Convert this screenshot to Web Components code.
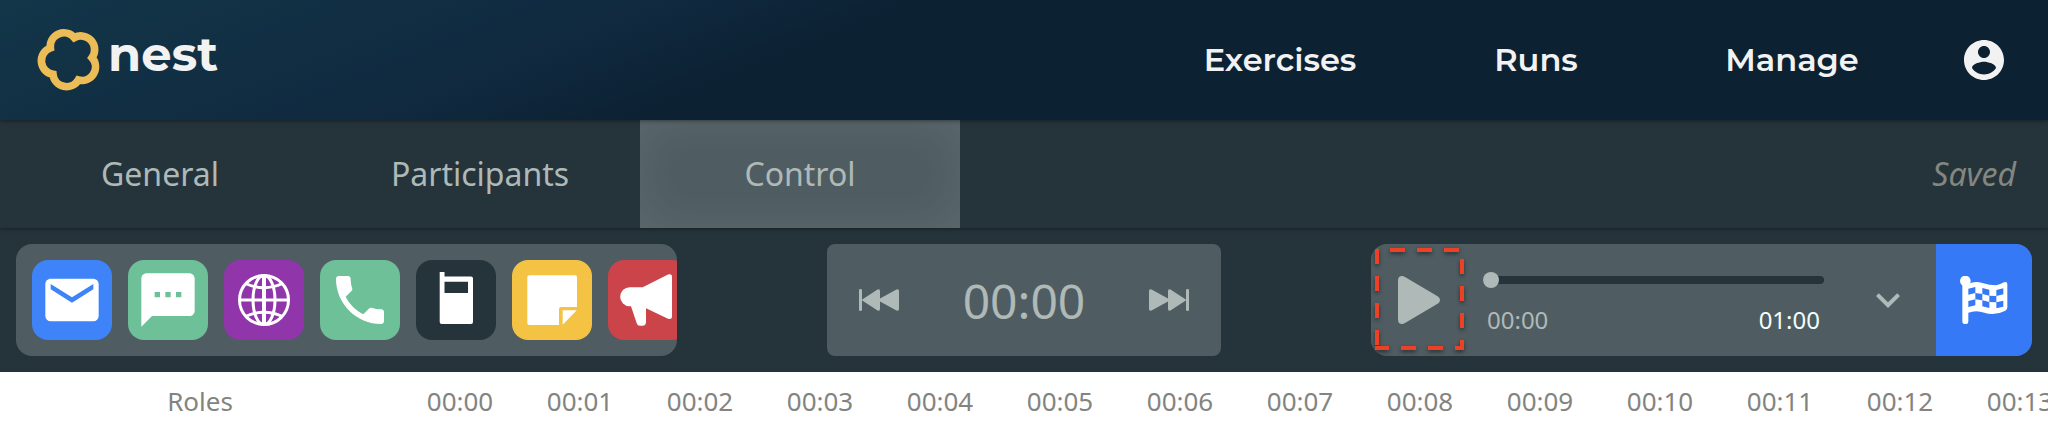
<!DOCTYPE html>
<html lang="en">
<head>
<meta charset="utf-8">
<meta name="viewport" content="width=device-width, initial-scale=1">
<title>Nest - Control</title>
<style>
    body {
        margin: 0;
        background: #fff;
        font-family: "Noto Sans", "Open Sans", sans-serif;
        overflow: hidden;
    }
</style>
</head>
<body>
<nest-app></nest-app>

<script>
// icon bodies, keyed by name: [viewBox, markup]
const ICONS = {
    logo: ['110 84 189 192', '<path fill="none" stroke="currentColor" stroke-width="23" d="M150 144A41 41 0 0 1 222 113A41 41 0 0 1 275 173A41 41 0 0 1 234 240A41 41 0 0 1 158 223A41 41 0 0 1 150 144Z"/>'],
    account: ['2 2 20 20', '<path d="M12 2C6.48 2 2 6.48 2 12s4.48 10 10 10 10-4.48 10-10S17.52 2 12 2zm0 3c1.66 0 3 1.34 3 3s-1.34 3-3 3-3-1.34-3-3 1.34-3 3-3zm0 14.2c-2.5 0-4.71-1.28-6-3.22.03-1.99 4-3.08 6-3.08 1.99 0 5.97 1.09 6 3.08-1.29 1.94-3.5 3.22-6 3.22z"/>'],
    mail: ['-3 -3 30 30', '<path d="M20 8l-8 5-8-5V6l8 5 8-5m0-2H4c-1.11 0-2 .89-2 2v12a2 2 0 0 0 2 2h16a2 2 0 0 0 2-2V6a2 2 0 0 0-2-2z"/>'],
    sms: ['-3 -3 30 30', '<path d="M20 2H4c-1.1 0-2 .9-2 2v18l4-4h14c1.1 0 2-.9 2-2V4c0-1.1-.9-2-2-2zM9 11H7V9h2v2zm4 0h-2V9h2v2zm4 0h-2V9h2v2z"/>'],
    globe: ['0 0 80 80', '<g fill="none" stroke="currentColor" stroke-width="3"><circle cx="40" cy="40" r="24.5"/><ellipse cx="40" cy="40" rx="11" ry="24.5"/><path stroke-width="4" d="M40 15v50"/><path d="M15 40h50M21.5 23.5Q40 32 58.5 23.5M21.5 56.5Q40 48 58.5 56.5"/></g>'],
    phone: ['-3 -3 30 30', '<path d="M6.62 10.79c1.44 2.83 3.76 5.14 6.59 6.59l2.2-2.2c.27-.27.67-.36 1.02-.24 1.12.37 2.33.57 3.57.57.55 0 1 .45 1 1V20c0 .55-.45 1-1 1-9.39 0-17-7.61-17-17 0-.55.45-1 1-1h3.5c.55 0 1 .45 1 1 0 1.25.2 2.45.57 3.57.11.35.03.74-.25 1.02l-2.2 2.2z"/>'],
    radio: ['0 0 80 80', '<path fill-rule="evenodd" d="M23.7 12h4.8v4.5H55a2 2 0 0 1 2 2V62a2 2 0 0 1-2 2H25.7a2 2 0 0 1-2-2zM28.5 21.7V33H52V21.7z"/>'],
    note: ['0 0 80 80', '<path d="M17.3 15.3H63a2 2 0 0 1 2 2V47H49a2 2 0 0 0-2 2v16H17.3a2 2 0 0 1-2-2V17.3a2 2 0 0 1 2-2zM50.7 50.3h14L50.7 64.7z"/>'],
    megaphone: ['0 0 80 80', '<path d="M21.7 27.2H34.7L60 14.6Q64 13.5 64 17V56.5Q64 60 60 58.7L38 48.3V62Q38 65.7 34.5 65.7H32Q29.5 65.7 28.8 63.5L23 46.3H21.7a9.55 9.55 0 0 1 0-19.1z"/>'],
    back: ['0 0 40 24', '<rect y="1" width="3" height="22" rx="1.3"/><path d="M2.5 12L18.5 1.5Q21 .5 21 3V10.500L37.5 1.5Q40 .5 40 3V21Q40 23.5 37.5 22.5L21 13.5V21Q21 23.5 18.5 22.5z"/>'],
    play: ['0 0 42 48', '<path d="M0 4.5Q0 0 4 0Q5.5 0 7 .9L40 20.5Q42 22 42 24T40 27.5L7 47.1Q5.5 48 4 48Q0 48 0 43.5z"/>'],
    chevron: ['0 0 24 24', '<path d="M7.41 8.59L12 13.17l4.59-4.58L18 10l-6 6-6-6z"/>'],
    flag: ['812 153 144 144', '<circle cx="828" cy="168" r="16"/><path fill-rule="evenodd" d="M819 168h18v8Q858 167 879 174T921 181Q933 178 944 172Q954 168 954 178V247Q954 254 948 257Q915 274 885 263Q860 254 837 263V290Q837 297 830 297H826Q819 297 819 290zM837 191V209L858 204V186zM879 189V207L900 212V194zM921 195V213L942 208V190zM858 204V223L879 226V207zM900 212V231L921 232V213zM837 228V246L858 241V223zM879 226V244L900 249V231zM921 232V250L942 245V227z"/>'],
};

class NestIcon extends HTMLElement {
    connectedCallback() {
        const [box, body] = ICONS[this.getAttribute('name')];
        this.attachShadow({ mode: 'open' });
        this.shadowRoot.innerHTML = `
            <style>
                :host { display: block; flex: none; }
                svg { display: block; width: 100%; height: 100%; fill: currentColor; }
            </style>
            <svg viewBox="${box}" aria-hidden="true">${body}</svg>
        `;
    }
}
customElements.define('nest-icon', NestIcon);

class NestHeader extends HTMLElement {
    connectedCallback() {
        this.attachShadow({ mode: 'open' });
        this.shadowRoot.innerHTML = `
            <style>
                :host {
                    display: block;
                    position: relative;
                    z-index: 2;
                    color: #f2f2f2;
                    background: linear-gradient(158deg, #133649 0%, #10293f 29%, #0c2132 40%);
                    box-shadow: 0 1px 4px rgba(0, 0, 0, .4);
                    font-family: Montserrat, Inter, sans-serif;
                    font-weight: 700;
                }
                header { display: flex; justify-content: space-between; height: 120px; }
                a { color: inherit; text-decoration: none; }
                .brand { display: flex; align-items: center; gap: 8px; padding-left: 37px; font-size: 48px; line-height: 64px; }
                .brand nest-icon { width: 63px; height: 64px; color: #ecbd56; }
                .brand span { padding-bottom: 12px; }
                nav { display: flex; font-size: 32px; font-weight: 600; }
                nav a {
                    display: flex;
                    align-items: center;
                    justify-content: center;
                    box-sizing: border-box;
                    width: 256px;
                    padding-bottom: 2px;
                }
                nav button { width: 128px; padding: 0; border: 0; background: none; color: inherit; }
                nav nest-icon { width: 40px; height: 40px; margin: 0 auto; }
            </style>
            <header>
                <a class="brand" href="#"><nest-icon name="logo"></nest-icon><span>nest</span></a>
                <nav>
                    <a href="#exercises">Exercises</a>
                    <a href="#runs">Runs</a>
                    <a href="#manage">Manage</a>
                    <button aria-label="Account"><nest-icon name="account"></nest-icon></button>
                </nav>
            </header>
        `;
    }
}
customElements.define('nest-header', NestHeader);

class NestTabs extends HTMLElement {
    connectedCallback() {
        this.attachShadow({ mode: 'open' });
        this.shadowRoot.innerHTML = `
            <style>
                :host {
                    display: block;
                    position: relative;
                    z-index: 1;
                    background: #25343b;
                    color: #afb9b8;
                    font-size: 32px;
                    box-shadow: 0 1px 4px rgba(0, 0, 0, .4);
                }
                nav { display: flex; height: 108px; }
                a {
                    display: flex;
                    align-items: center;
                    justify-content: center;
                    box-sizing: border-box;
                    width: 320px;
                    padding-bottom: 2px;
                    color: inherit;
                    text-decoration: none;
                }
                a[aria-current] { background: #4f5d62; box-shadow: inset 0 0 48px rgba(255, 255, 255, .08); }
                em { margin: auto 32px auto auto; padding-bottom: 2px; color: #848680; }
            </style>
            <nav>
                <a href="#general">General</a>
                <a href="#participants">Participants</a>
                <a href="#control" aria-current="page">Control</a>
                <em>Saved</em>
            </nav>
        `;
    }
}
customElements.define('nest-tabs', NestTabs);

class ToolPalette extends HTMLElement {
    connectedCallback() {
        this.attachShadow({ mode: 'open' });
        this.shadowRoot.innerHTML = `
            <style>
                :host {
                    display: flex;
                    gap: 16px;
                    box-sizing: border-box;
                    padding: 16px;
                    border-radius: 16px;
                    background: #4f5d62;
                    overflow: hidden;
                }
                button {
                    flex: none;
                    width: 80px;
                    height: 80px;
                    padding: 0;
                    border: 0;
                    border-radius: 16px;
                    color: #fff;
                }
                nest-icon { width: 80px; height: 80px; }
            </style>
            <button aria-label="Email" style="background: #3e83f8"><nest-icon name="mail"></nest-icon></button>
            <button aria-label="Text message" style="background: #6dc098"><nest-icon name="sms"></nest-icon></button>
            <button aria-label="Web" style="background: #9035aa"><nest-icon name="globe"></nest-icon></button>
            <button aria-label="Phone" style="background: #6dc098"><nest-icon name="phone"></nest-icon></button>
            <button aria-label="Radio" style="background: #25343b"><nest-icon name="radio"></nest-icon></button>
            <button aria-label="Note" style="background: #f4c344"><nest-icon name="note"></nest-icon></button>
            <button aria-label="Announcement" style="background: #cb444a"><nest-icon name="megaphone"></nest-icon></button>
        `;
    }
}
customElements.define('tool-palette', ToolPalette);

class RunClock extends HTMLElement {
    connectedCallback() {
        this.attachShadow({ mode: 'open' });
        this.shadowRoot.innerHTML = `
            <style>
                :host {
                    display: flex;
                    align-items: center;
                    justify-content: space-between;
                    padding: 0 32px;
                    border-radius: 8px;
                    background: #4f5d62;
                    color: #afb9b8;
                    font-size: 48px;
                }
                button { padding: 0; border: 0; background: none; color: inherit; }
                nest-icon { width: 40px; height: 24px; }
                .next { transform: scaleX(-1); }
            </style>
            <button aria-label="Back to start"><nest-icon name="back"></nest-icon></button>
            <time><slot></slot></time>
            <button aria-label="Skip to end"><nest-icon class="next" name="back"></nest-icon></button>
        `;
    }
}
customElements.define('run-clock', RunClock);

class RunPlayer extends HTMLElement {
    connectedCallback() {
        this.attachShadow({ mode: 'open' });
        this.shadowRoot.innerHTML = `
            <style>
                :host {
                    display: flex;
                    border-radius: 16px;
                    background: #4f5d62;
                    color: #afb9b8;
                    font-size: 24px;
                    overflow: hidden;
                }
                button {
                    display: flex;
                    align-items: center;
                    justify-content: center;
                    flex: none;
                    position: relative;
                    width: 96px;
                    padding: 0;
                    border: 0;
                    background: none;
                    color: inherit;
                }
                .play nest-icon { width: 42px; height: 48px; }
                .more nest-icon { width: 48px; height: 48px; }
                .finish { background: #3579f7; color: #fff; }
                .finish nest-icon { width: 48px; height: 48px; }
                .marker {
                    position: absolute;
                    inset: 0;
                    fill: none;
                    stroke: #ec4125;
                    stroke-width: 4;
                    filter: drop-shadow(0 2px 2px rgba(0, 0, 0, .5));
                }
                .progress {
                    flex: 1;
                    display: flex;
                    flex-direction: column;
                    justify-content: center;
                    gap: 16px;
                    margin: 0 16px;
                    padding-top: 8px;
                }
                .times { display: flex; justify-content: space-between; padding: 0 4px; line-height: 32px; }
                .total { color: #f2fffc; }
                input {
                    appearance: none;
                    display: block;
                    width: 100%;
                    height: 16px;
                    margin: 0;
                    background: none;
                }
                input::-webkit-slider-runnable-track { height: 8px; border-radius: 4px; background: #25343b; }
                input::-webkit-slider-thumb {
                    appearance: none;
                    width: 16px;
                    height: 16px;
                    margin-top: -4px;
                    border-radius: 50%;
                    background: #afb9b8;
                }
            </style>
            <button class="play" aria-label="Play">
                <nest-icon name="play"></nest-icon>
                <svg class="marker" viewBox="0 0 96 112" aria-hidden="true">
                    <path d="M6 5V104" stroke-dasharray="15 12"/>
                    <path d="M6 6H91V104H4" stroke-dasharray="15 12" stroke-dashoffset="-13"/>
                </svg>
            </button>
            <div class="progress">
                <input type="range" min="0" max="60" value="0" aria-label="Position">
                <div class="times"><time>00:00</time><time class="total">01:00</time></div>
            </div>
            <button class="more" aria-label="More options"><nest-icon name="chevron"></nest-icon></button>
            <button class="finish" aria-label="Finish run"><nest-icon name="flag"></nest-icon></button>
        `;
    }
}
customElements.define('run-player', RunPlayer);

class TimelineRuler extends HTMLElement {
    connectedCallback() {
        const minutes = Array.from({ length: 14 }, (_, i) => `<th scope="col">00:${String(i).padStart(2, '0')}</th>`);
        this.attachShadow({ mode: 'open' });
        this.shadowRoot.innerHTML = `
            <style>
                :host { display: block; overflow: hidden; color: #83847f; font-size: 26px; }
                table { table-layout: fixed; width: 2080px; border-collapse: collapse; }
                th { width: 120px; height: 58px; padding: 0; font-weight: 400; text-align: center; }
                th:first-child { width: 400px; }
            </style>
            <table>
                <thead><tr><th scope="col">Roles</th>${minutes.join('')}</tr></thead>
            </table>
        `;
    }
}
customElements.define('timeline-ruler', TimelineRuler);

class NestApp extends HTMLElement {
    connectedCallback() {
        this.attachShadow({ mode: 'open' });
        this.shadowRoot.innerHTML = `
            <style>
                :host { display: block; }
                .toolbar {
                    display: grid;
                    grid-template-columns: minmax(0, 1fr) 394px minmax(0, 1fr);
                    column-gap: 150px;
                    padding: 16px;
                    background: #25343b;
                }
            </style>
            <nest-header></nest-header>
            <nest-tabs></nest-tabs>
            <div class="toolbar">
                <tool-palette></tool-palette>
                <run-clock>00:00</run-clock>
                <run-player></run-player>
            </div>
            <timeline-ruler></timeline-ruler>
        `;
    }
}
customElements.define('nest-app', NestApp);
</script>
</body>
</html>
